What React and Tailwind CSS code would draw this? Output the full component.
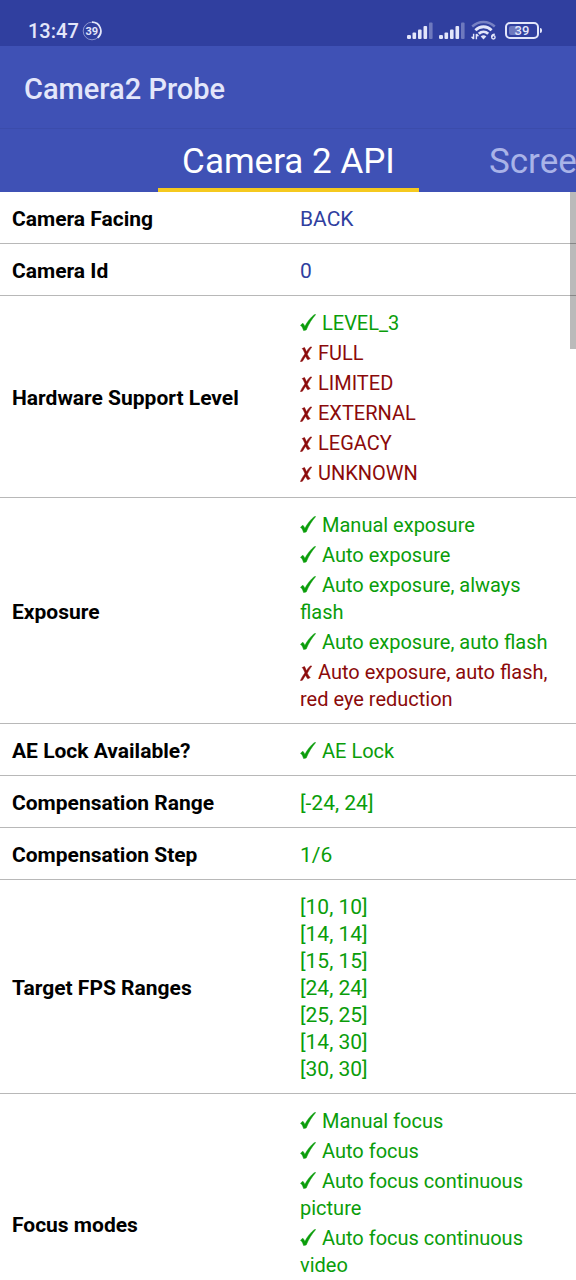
const yes = (text) => ({ text, mark: "yes" });
const no = (text) => ({ text, mark: "no" });
const info = (text) => ({ text, mark: "info" });
const value = (text) => ({ text, mark: "value" });

const rows = [
  { label: "Camera Facing", items: [info("BACK")] },
  { label: "Camera Id", items: [info("0")] },
  {
    label: "Hardware Support Level",
    items: [yes("LEVEL_3"), no("FULL"), no("LIMITED"), no("EXTERNAL"), no("LEGACY"), no("UNKNOWN")],
  },
  {
    label: "Exposure",
    items: [
      yes("Manual exposure"),
      yes("Auto exposure"),
      yes("Auto exposure, always flash"),
      yes("Auto exposure, auto flash"),
      no("Auto exposure, auto flash, red eye reduction"),
    ],
  },
  { label: "AE Lock Available?", items: [yes("AE Lock")] },
  { label: "Compensation Range", items: [value("[-24, 24]")] },
  { label: "Compensation Step", items: [value("1/6")] },
  {
    label: "Target FPS Ranges",
    items: ["[10, 10]", "[14, 14]", "[15, 15]", "[24, 24]", "[25, 25]", "[14, 30]", "[30, 30]"].map(value),
  },
  {
    label: "Focus modes",
    tall: true,
    items: [
      yes("Manual focus"),
      yes("Auto focus"),
      yes("Auto focus continuous picture"),
      yes("Auto focus continuous video"),
    ],
  },
];

const styles = {
  yes: "text-[20px] text-[#0a9d0a] mb-[3px] last:mb-0",
  no: "text-[20px] text-[#8b0a0a] mb-[3px] last:mb-0",
  value: "text-[#0a9d0a]",
  info: "text-[#303f9f]",
};

function CheckMark() {
  return (
    <svg viewBox="0 0 16 17" className="mr-[6px] inline h-[17px] w-4 align-[-1px]" fill="currentColor" stroke="currentColor" strokeWidth="0.5" strokeLinejoin="round" role="img" aria-label="Supported">
      <path d="M0.500 11.200L2.800 9.300C3.700 10 4.400 11.200 4.800 12.600C7.400 7.600 10.500 3.600 14.200 0.700L15.700 0.500C11.800 5 8.600 10.200 6.200 16L3.600 16.600C3 14.300 2 12.400 0.500 11.200Z" />
    </svg>
  );
}

function CrossMark() {
  return (
    <svg viewBox="0 0 12 16" className="mr-[6px] inline h-4 w-3 align-[-2px]" fill="currentColor" stroke="currentColor" strokeWidth="0.6" strokeLinejoin="round" role="img" aria-label="Not supported">
      <path d="M2.200 2.600L4.500 1.600C5.200 2.900 5.800 4.400 6.300 5.800C7.500 3.800 9 2.200 10.400 0.900L11.700 1.100C10.200 3.200 8.500 5.600 7.200 8.200C8 10 9 11.600 10.200 12.600L7.800 13.700C7 12.800 6.300 11.500 5.700 10.200C4.500 11.800 3.300 13.600 2.400 15.200L0.500 15.600C1.500 12.800 3.200 10.200 5 7.900C4.300 5.800 3.400 3.800 2.200 2.600Z" />
    </svg>
  );
}

function Item({ item }) {
  return (
    <li className={styles[item.mark]}>
      {item.mark === "yes" && <CheckMark />}
      {item.mark === "no" && <CrossMark />}
      {item.text}
    </li>
  );
}

function Signal() {
  return (
    <svg viewBox="0 0 26 17" className="h-[17px] w-[26px]" fill="#e3e6fa" aria-hidden="true">
      <rect x="0" y="13" width="4" height="4" rx="1.200" />
      <rect x="5.500" y="10.500" width="3.600" height="6.500" rx="1" />
      <rect x="11" y="7.500" width="3.600" height="9.500" rx="1" />
      <rect x="16.500" y="4" width="3.600" height="13" rx="1" />
      <rect x="22" y="0.500" width="3.600" height="16.500" rx="1" opacity="0.350" />
    </svg>
  );
}

function Wifi() {
  return (
    <svg viewBox="0 0 26 20" className="h-5 w-[26px]" fill="none" stroke="#e3e6fa" aria-hidden="true">
      <path d="M1.200 6.500C7.800 0.400 17.200 0.400 23.800 6.500" strokeWidth="2.400" opacity="0.400" />
      <path d="M4.400 10.200C9 5.600 16 5.600 20.600 10.200" strokeWidth="2.800" />
      <path d="M7.800 13.800C10.600 11.200 14.400 11.200 17.200 13.800" strokeWidth="2.800" />
      <path d="M9.700 16.400Q12.500 14 15.300 16.400L12.500 19.400Z" fill="#e3e6fa" stroke="none" />
      <path d="M2.600 13.800v5.200M0.600 16.800L2.600 19M5.400 19.200v-5.200M7.400 16.200L5.400 14" strokeWidth="1.400" />
      <path d="M23.800 14.200C21.600 14.400 20.600 15.600 20.600 17.200" strokeWidth="1.400" />
      <circle cx="22.400" cy="17.300" r="1.700" strokeWidth="1.400" />
    </svg>
  );
}

function StatusBar() {
  return (
    <div className="flex h-[46px] items-end justify-between bg-[#303f9f] pr-[34px] pb-1 pl-7 text-[#e3e6fa]">
      <div className="flex items-center gap-[3px]">
        <span className="text-[20px] leading-[22px] font-medium">13:47</span>
        <span className="relative flex size-5 items-center justify-center">
          <svg viewBox="0 0 20 20" className="absolute inset-0 size-5" fill="none" stroke="#e3e6fa" aria-hidden="true">
            <circle cx="10" cy="10" r="8.800" strokeWidth="1" opacity="0.500" />
            <path d="M10 1.200A8.800 8.800 0 0 1 15.600 16.800" strokeWidth="1.700" />
          </svg>
          <span className="text-[11px] leading-none font-bold">39</span>
        </span>
      </div>
      <div className="mb-[2px] flex items-center gap-[6px]">
        <Signal />
        <Signal />
        <Wifi />
        <div className="flex items-center gap-[1px] pl-[2px]">
          <span className="relative flex h-[17px] w-[34px] items-center justify-center rounded-[5px] border-2 border-[#e3e6fa]">
            <span className="absolute inset-y-[2px] left-[2px] w-[10px] rounded-[2px] bg-[#e3e6fa]/35" />
            <span className="relative text-[13px] leading-none font-medium">39</span>
          </span>
          <span className="h-[5px] w-[2px] rounded-r bg-[#e3e6fa]" />
        </div>
      </div>
    </div>
  );
}

export default function App() {
  return (
    <div className="h-screen overflow-hidden bg-white font-[Roboto,sans-serif]">
      <header className="bg-[#3f51b5]">
        <StatusBar />
        <div className="flex h-[82px] items-center px-6 pt-1">
          <h1 className="text-[29px] leading-8 font-medium text-[#e3e6fa]">Camera2 Probe</h1>
        </div>
        <nav className="flex h-16 overflow-hidden border-t border-[#3b4cab] pl-[158px]">
          <a href="#api" className="flex w-[261px] shrink-0 items-center justify-center border-b-4 border-[#f5c91f] pt-[6px] text-[35px] leading-10 text-white">
            Camera 2 API
          </a>
          <a href="#screen" className="ml-[70px] flex shrink-0 items-center border-b-4 border-transparent pt-[6px] text-[35px] leading-10 text-[#a9b3e8]">
            Screen
          </a>
        </nav>
      </header>
      <main className="relative">
        <table className="w-full table-fixed border-collapse text-[21px] leading-[27px]">
          <tbody>
            {rows.map((row) => (
              <tr key={row.label} className={`border-b border-[#b8b8b8] ${row.tall ? "h-[260px]" : ""}`}>
                <th scope="row" className="w-1/2 px-3 pt-[14px] pb-[10px] text-left font-bold text-black">
                  {row.label}
                </th>
                <td className="px-3 pt-[14px] pb-[10px] align-top">
                  <ul>
                    {row.items.map((item) => (
                      <Item key={item.text} item={item} />
                    ))}
                  </ul>
                </td>
              </tr>
            ))}
          </tbody>
        </table>
        <div className="absolute top-0 right-0 h-[157px] w-[6px] bg-black/27" />
      </main>
    </div>
  );
}
